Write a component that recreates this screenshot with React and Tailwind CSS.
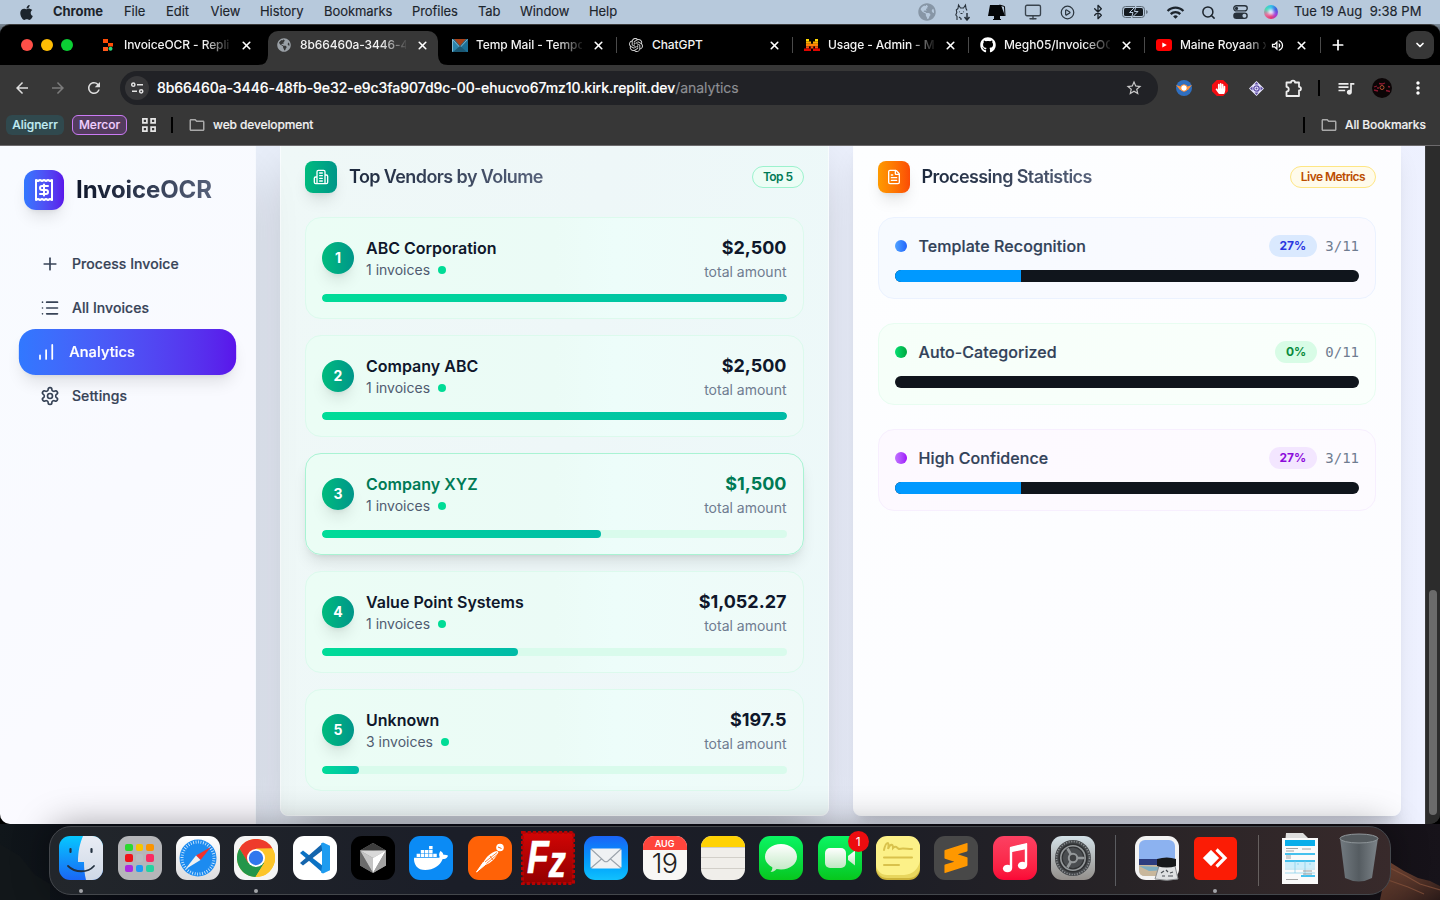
import React from "react";
import { Plus, List, Receipt, FileText, X, ChevronDown, Search, Monitor, CirclePlay, Bluetooth } from "lucide-react";
import { FaApple, FaDocker, FaGithub, FaGlobeAmericas, FaHandPaper } from "react-icons/fa";
import { SiOpenai, SiSublimetext } from "react-icons/si";
import { MdArrowBack, MdArrowForward, MdRefresh, MdStarOutline, MdOutlineExtension, MdQueueMusic, MdMoreVert, MdOutlineFolder, MdOutlineVolumeUp, MdWifi } from "react-icons/md";

const menus = [
  ["File", "w-[42px]"],
  ["Edit", "w-[44.5px]"],
  ["View", "w-[49.5px]"],
  ["History", "w-[64px]"],
  ["Bookmarks", "w-[88px]"],
  ["Profiles", "w-[66px]"],
  ["Tab", "w-[42px]"],
  ["Window", "w-[69px]"],
  ["Help", "w-[40px]"],
];

function MenuBar() {
  return (
    <div className="flex h-6 shrink-0 items-center bg-[#b7c9dc] text-[13px] font-medium tracking-[-0.07px] text-[#1c242c]">
      <div className="flex w-[53px] shrink-0 justify-center"><FaApple className="h-[17px] w-[17px]" /></div>
      <div className="w-[71px] font-bold">Chrome</div>
      {menus.map(([t, w]) => (
        <div key={t} className={w + " shrink-0 whitespace-nowrap font-normal [-webkit-text-stroke:0.15px]"}>{t}</div>
      ))}
      <div className="ml-auto flex items-center">
        <div className="flex w-9 justify-center"><FaGlobeAmericas className="h-[18px] w-[18px] text-[#8796a6]" /></div>
        <div className="flex w-[34px] justify-center">
          <svg width="18" height="18" viewBox="0 0 18 18" fill="none" stroke="#27313b" strokeWidth="1.1">
            <path d="M4 17v-3.500l-1.200-1.500 1-2.500-.5-2.500L5 5.500 5.500 2l2 3h3l2-3 .5 3.500 1 2M6.500 8.500v.8M10.500 8.500v.8M7.500 10.500h2M6 14l2 1.500V17" />
            <path d="M14 10v6M11.500 14l2.500 3 2.500-3" strokeWidth="1.500" />
          </svg>
        </div>
        <div className="flex w-[35px] justify-center">
          <svg width="20" height="18" viewBox="0 0 20 18"><path d="M3 2h11l4 11H1z" fill="#030507" /><path d="M12.500 2l5 1.500.5 9.500" stroke="#030507" fill="none" /><path d="M7.500 13h5v3h-5zM6 16.500h8" stroke="#030507" fill="#030507" /></svg>
        </div>
        <div className="flex w-[37px] justify-center"><Monitor className="h-[18px] w-[18px] text-[#3a444e]" strokeWidth={1.8} /></div>
        <div className="flex w-[32px] justify-center"><CirclePlay className="h-[15px] w-[15px] text-[#2d3740]" strokeWidth={2} /></div>
        <div className="flex w-[30px] justify-center"><Bluetooth className="h-[16px] w-[16px]" strokeWidth={2} /></div>
        <div className="flex w-[44px] justify-center">
          <svg width="26" height="12" viewBox="0 0 26 12"><rect x=".5" y=".5" width="22" height="11" rx="3" fill="none" stroke="#5b6874" /><rect x="2" y="2" width="19" height="8" rx="1.500" fill="#141a20" /><path d="M24.200 4v4q1.500-.5 1.500-2t-1.500-2" fill="#5b6874" /><path d="M14 0L7.500 6.500h3.500L9.500 12 16 5.500h-3.500z" fill="#141a20" stroke="#b7c9dc" strokeWidth="1" /></svg>
        </div>
        <div className="flex w-[36px] justify-center"><MdWifi className="h-[19px] w-[19px]" /></div>
        <div className="flex w-[30px] justify-center"><Search className="h-[15px] w-[15px]" strokeWidth={2.4} /></div>
        <div className="flex w-[34px] justify-center">
          <svg width="15" height="14" viewBox="0 0 15 14"><rect x=".75" y=".75" width="13.500" height="5.200" rx="2.600" fill="none" stroke="#27313b" strokeWidth="1.300" /><circle cx="3.500" cy="3.400" r="1.600" fill="#27313b" /><rect x=".2" y="7.600" width="14.600" height="6.400" rx="3.200" fill="#27313b" /><circle cx="11.400" cy="10.800" r="2" fill="#b7c9dc" /></svg>
        </div>
        <div className="flex w-[28px] justify-center">
          <div className="h-[14px] w-[14px] rounded-full bg-[conic-gradient(#2ec4e8,#3a5fe0,#a53ad8,#e8356f,#e46a9a,#4fd8b0,#2ec4e8)] p-[4px]"><div className="h-full w-full rounded-full bg-[#e8f0ff] blur-[1.5px]" /></div>
        </div>
        <div className="ml-[9px] w-[146px] whitespace-pre font-normal tracking-[0.03px] [-webkit-text-stroke:0.15px]">{"Tue 19 Aug  9:38 PM"}</div>
      </div>
    </div>
  );
}

const ReplitIcon = () => (
  <svg width="16" height="16" viewBox="0 0 16 16"><path d="M3 2h5v4H3zM8 6h5v3.500H8z" fill="#ff4c05" /><path d="M3 10h5v4H3z" fill="#ff5a1c" /><circle cx="10.500" cy="11.800" r="2" fill="#2bd97c" /></svg>
);
const TempMailIcon = () => (
  <svg width="16" height="13" viewBox="0 0 16 13"><path d="M0 0h16v13H0z" fill="#1b6f96" /><path d="M0 0l8 8v5H0z" fill="#2a83ab" /><path d="M2 0h12L8 7z" fill="#a5421a" /><path d="M.5.5L8 8.500l7.500-8M.5.5v12" fill="none" stroke="#9fc7d9" strokeWidth=".8" /><path d="M1 13l7-6 7 6z" fill="#1b5873" /></svg>
);
const MistralIcon = () => (
  <svg width="16" height="12" viewBox="0 0 16 12"><path d="M2 0h3v2.400H2zM11 0h3v2.400h-3z" fill="#ffd800" /><path d="M2 2.400h5v2.400H2zM9 2.400h5v2.400H9z" fill="#ffaf00" /><path d="M2 4.800h12v2.400H2z" fill="#ff8205" /><path d="M2 7.200h3v2.400H2zM6.700 7.200h2.600v2.400H6.700zM11 7.200h3v2.400h-3z" fill="#fa500f" /><path d="M0 9.600h7V12H0zM9 9.600h7V12H9z" fill="#e10500" /></svg>
);
const YouTubeIcon = () => (
  <svg width="16" height="12" viewBox="0 0 16 12"><rect width="16" height="12" rx="3" fill="#f00" /><path d="M6.300 3.400v5.200L10.800 6z" fill="#fff" /></svg>
);

const tabs = [
  { icon: <ReplitIcon />, title: "InvoiceOCR - Repli" },
  { icon: <FaGlobeAmericas className="h-[14px] w-[14px] text-[#9aa0a6]" />, title: "8b66460a-3446-4", active: true },
  { icon: <TempMailIcon />, title: "Temp Mail - Tempo", sep: true },
  { icon: <SiOpenai className="h-[14px] w-[14px] text-[#d8d8d8]" />, title: "ChatGPT", sep: true },
  { icon: <MistralIcon />, title: "Usage - Admin - M", sep: true },
  { icon: <FaGithub className="h-4 w-4 text-white" />, title: "Megh05/InvoiceOC", sep: true },
  { icon: <YouTubeIcon />, title: "Maine Royaan x", sep: true, sound: true },
];

function Tab({ tab }) {
  return (
    <div className="flex h-[40px] w-[176px] shrink-0 items-end pl-[3px]">
      <div className={"relative flex h-[34px] w-[170px] items-center pb-[6px] pl-2 " + (tab.active ? "rounded-t-[10px] bg-[#373737]" : "")}>
        {tab.active && (
          <>
            <svg className="absolute bottom-0 -left-[10px]" width="10" height="10"><path d="M10 0v10H0Q10 10 10 0" fill="#373737" /></svg>
            <svg className="absolute -right-[10px] bottom-0" width="10" height="10"><path d="M0 0v10h10Q0 10 0 0" fill="#373737" /></svg>
          </>
        )}
        <div className="flex w-4 shrink-0 justify-center">{tab.icon}</div>
        <div className={"ml-2 shrink-0 text-[12px] font-medium whitespace-nowrap text-[#f2f2f2] " + (tab.sound ? "w-[86px] tracking-[-0.1px]" : "w-[106px] tracking-[-0.1px]") + (tab.title === "ChatGPT" ? "" : " [mask-image:linear-gradient(90deg,#000_76%,transparent_103%)]")}>{tab.title}</div>
        {tab.sound && <MdOutlineVolumeUp className="ml-[4px] h-[15px] w-[15px] shrink-0 text-white" />}
        <X className={"h-[13px] w-[13px] shrink-0 text-white " + (tab.sound ? "ml-[10px]" : "ml-[10px]")} strokeWidth={3} />
      </div>
      <div className={"mb-[12px] ml-[2px] h-4 w-px shrink-0 " + (tab.sep ? "bg-[#4a4a4a]" : "")} />
    </div>
  );
}

function BrowserChrome() {
  return (
    <>
      <div className="flex h-[40px] shrink-0 bg-black">
        <div className="flex w-[89px] items-center gap-2 pl-[21px]">
          <div className="h-3 w-3 rounded-full bg-[#ff4f48]" />
          <div className="h-3 w-3 rounded-full bg-[#ffbd04]" />
          <div className="h-3 w-3 rounded-full bg-[#0bcf34]" />
        </div>
        {tabs.map((t) => <Tab key={t.title} tab={t} />)}
        <div className="flex w-[34px] items-center justify-center text-white"><Plus className="h-[16px] w-[16px]" strokeWidth={2.6} /></div>
        <div className="mt-[6px] ml-[51px] flex h-7 w-7 items-center justify-center rounded-[9px] bg-[#373737] text-white"><ChevronDown className="h-3 w-3" strokeWidth={3.4} /></div>
      </div>
      <div className="flex h-[46px] shrink-0 items-center bg-[#373737] text-[#dedede]">
        <MdArrowBack className="ml-[13px] h-[18px] w-[18px]" />
        <MdArrowForward className="ml-[18px] h-[18px] w-[18px] text-[#7c7c7c]" />
        <MdRefresh className="ml-[18px] h-[18px] w-[18px]" />
        <div className="ml-[17px] flex h-[34px] w-[1038px] items-center rounded-full bg-[#212226] pl-[5px]">
          <div className="flex h-6 w-6 items-center justify-center rounded-full bg-[#373739]">
            <svg width="13" height="12" viewBox="0 0 13 12" fill="none" stroke="#e4e4e4" strokeWidth="1.500"><circle cx="2.300" cy="2.700" r="1.600" /><path d="M6 2.700h6M1 9.300h5" /><circle cx="10.200" cy="9.300" r="1.600" /></svg>
          </div>
          <div className="ml-2 -mt-[2px] text-[14px] font-medium tracking-[-0.065px] whitespace-nowrap text-white [-webkit-text-stroke:0.15px]">8b66460a-3446-48fb-9e32-e9c3fa907d9c-00-ehucvo67mz10.kirk.replit.dev<span className="font-normal text-[#8e9094]">/analytics</span></div>
          <MdStarOutline className="mr-[15px] ml-auto h-[18px] w-[18px] text-[#c9c9c9]" />
        </div>
        <svg className="ml-[18px]" width="16" height="16" viewBox="0 0 16 16"><circle cx="8" cy="8" r="8" fill="#2f6fc0" /><path d="M0 5l6 2 2-2 2 2 6-2-4 5H4z" fill="#ff9238" /><circle cx="8" cy="8" r="3.300" fill="#fff" stroke="#f58227" /></svg>
        <div className="ml-5 flex h-4 w-4 items-center justify-center bg-[#f40d12] [clip-path:polygon(30%_0,70%_0,100%_30%,100%_70%,70%_100%,30%_100%,0_70%,0_30%)]"><FaHandPaper className="h-[11px] w-[11px] text-white" /></div>
        <svg className="ml-[21px]" width="15" height="15" viewBox="0 0 15 15"><path d="M7.500 0L15 7.500 7.500 15 0 7.500z" fill="#eceaff" /><path d="M7.500 1L9.500 3.500h-4zM7.500 14l-2-2.500h4zM1 7.500l2.500-2v4zM14 7.500l-2.500-2v4z" fill="#5c4ba4" /><circle cx="7.500" cy="7.500" r="2.700" fill="none" stroke="#5c4ba4" strokeWidth="1.300" /><circle cx="7.500" cy="7.500" r="1" fill="#5c4ba4" /></svg>
        <svg className="ml-[20px]" width="19" height="19" viewBox="0 0 19 19" fill="none" stroke="#ededed" strokeWidth="1.800" strokeLinejoin="round"><path d="M2.500 3.500H7c0-2.600 4-2.600 4 0h4v4.300c2.600 0 2.600 3.700 0 3.700v5.500H2.500v-4.300c3-.2 3-4.700 0-4.900z" /></svg>
        <div className="ml-[15px] h-4 w-[2px] bg-black" />
        <MdQueueMusic className="ml-[16px] h-5 w-5 text-[#ededed]" />
        <svg className="ml-4" width="20" height="20" viewBox="0 0 20 20"><circle cx="10" cy="10" r="10" fill="#0c0506" /><path d="M2 9l3-1M7 5.500l3 .5 3-1M16 8.500l2 .5M2 12l4 1M14 12.500l4 1M5 10h2" stroke="#8a1830" strokeWidth="1.300" fill="none" /><circle cx="10" cy="9.500" r="2" fill="none" stroke="#b2502f" /></svg>
        <MdMoreVert className="ml-[16px] h-5 w-5 text-white" />
      </div>
      <div className="flex h-[35px] shrink-0 items-center border-b border-[#6c6a6c] bg-[#373737] pb-[7px] text-[12px] font-medium tracking-[-0.12px] whitespace-nowrap text-[#f1f1f1] [-webkit-text-stroke:0.15px]">
        <div className="ml-[6px] flex h-5 w-[58px] items-center justify-center rounded-[6px] bg-[#30494e] tracking-normal text-[#c3eef5]">Alignerr</div>
        <div className="ml-2 flex h-5 w-[55px] items-center justify-center rounded-[6px] border border-[#cb7bf5] bg-[#533c5e] tracking-normal text-[#f1d1ff]">Mercor</div>
        <svg className="ml-[15px]" width="14" height="14" viewBox="0 0 14 14" fill="none" stroke="#e6e6e6" strokeWidth="1.700"><path d="M.9.900h4v4h-4zM9.100.900h4v4h-4zM.9 9.100h4v4h-4zM9.100 9.100h4v4h-4z" /></svg>
        <div className="ml-[15px] h-4 w-[2px] bg-black" />
        <MdOutlineFolder className="ml-[15px] h-[18px] w-[18px] text-[#a9a9a9]" />
        <div className="ml-[7px]">web development</div>
        <div className="ml-auto h-4 w-[2px] bg-black" />
        <MdOutlineFolder className="ml-[15px] h-[18px] w-[18px] text-[#a9a9a9]" />
        <div className="mr-[14px] ml-[7px] w-[81px]">All Bookmarks</div>
      </div>
    </>
  );
}

const SettingsIcon = () => (
  <svg className="h-5 w-5" viewBox="0 0 24 24" fill="none" stroke="currentColor" strokeWidth="2" strokeLinecap="round" strokeLinejoin="round">
    <path d="M12.220 2h-.44a2 2 0 0 0-2 2v.18a2 2 0 0 1-1 1.730l-.43.25a2 2 0 0 1-2 0l-.15-.08a2 2 0 0 0-2.730.73l-.22.38a2 2 0 0 0 .73 2.730l.15.1a2 2 0 0 1 1 1.720v.51a2 2 0 0 1-1 1.740l-.15.09a2 2 0 0 0-.73 2.730l.22.38a2 2 0 0 0 2.730.73l.15-.08a2 2 0 0 1 2 0l.43.25a2 2 0 0 1 1 1.730V20a2 2 0 0 0 2 2h.44a2 2 0 0 0 2-2v-.18a2 2 0 0 1 1-1.730l.43-.25a2 2 0 0 1 2 0l.15.08a2 2 0 0 0 2.730-.73l.22-.39a2 2 0 0 0-.73-2.730l-.15-.08a2 2 0 0 1-1-1.740v-.5a2 2 0 0 1 1-1.740l.15-.09a2 2 0 0 0 .73-2.730l-.22-.38a2 2 0 0 0-2.730-.73l-.15.08a2 2 0 0 1-2 0l-.43-.25a2 2 0 0 1-1-1.730V4a2 2 0 0 0-2-2z" />
    <circle cx="12" cy="12" r="3" />
  </svg>
);
const BarsIcon = () => (
  <svg className="h-5 w-5" viewBox="0 0 24 24" fill="none" stroke="currentColor" strokeWidth="2" strokeLinecap="round"><path d="M5 20v-4M12 20V10M19 20V4" /></svg>
);
const BuildingIcon = () => (
  <svg className="h-4 w-4" viewBox="0 0 24 24" fill="none" stroke="currentColor" strokeWidth="2" strokeLinecap="round" strokeLinejoin="round"><path d="M6 22V4a2 2 0 0 1 2-2h8a2 2 0 0 1 2 2v18ZM6 12H4a2 2 0 0 0-2 2v6a2 2 0 0 0 2 2h2M18 9h2a2 2 0 0 1 2 2v9a2 2 0 0 1-2 2h-2M10 6h4M10 10h4M10 14h4M10 18h4" /></svg>
);

function Sidebar() {
  const item = "flex h-11 items-center gap-3 rounded-2xl px-4 text-[14px] font-medium tracking-[0.06px] text-[#374357] [-webkit-text-stroke:0.2px]";
  return (
    <aside className="z-10 w-64 shrink-0 border-r border-[#f6f9fe] bg-[linear-gradient(135deg,#f8fbff_0%,#f9faff_50%,#fcfaff_100%)] px-6 pt-6 shadow-[0_25px_50px_-12px_rgba(0,0,0,0.2)]">
      <div className="flex items-center gap-3">
        <div className="flex h-10 w-10 items-center justify-center rounded-xl bg-linear-to-r from-[#3178ff] to-[#5a14ea] text-white shadow-lg"><Receipt className="h-6 w-6" strokeWidth={2} /></div>
        <div className="bg-linear-to-r from-[#0f172b] to-[#56617a] bg-clip-text text-[24px] leading-8 font-bold tracking-[-0.1px] text-transparent">InvoiceOCR</div>
      </div>
      <nav className="mt-8">
        <div className={item}><Plus className="h-5 w-5" /><span className="-mt-[2px]">Process Invoice</span></div>
        <div className={item}><List className="h-5 w-5" /><span className="-mt-[2px]">All Invoices</span></div>
        <div className="flex h-11 scale-105 items-center gap-3 rounded-2xl bg-linear-to-r from-[#3178ff] to-[#5a14ea] px-4 text-[14px] font-medium tracking-[0.06px] text-white shadow-lg [-webkit-text-stroke:0.2px]"><BarsIcon /><span className="-mt-[2px]">Analytics</span></div>
        <div className={item}><SettingsIcon /><span className="-mt-[2px]">Settings</span></div>
      </nav>
    </aside>
  );
}

const vendors = [
  { name: "ABC Corporation", count: 1, amount: "$2,500", pct: 100 },
  { name: "Company ABC", count: 1, amount: "$2,500", pct: 100 },
  { name: "Company XYZ", count: 1, amount: "$1,500", pct: 60, hover: true },
  { name: "Value Point Systems", count: 1, amount: "$1,052.27", pct: 42.1 },
  { name: "Unknown", count: 3, amount: "$197.5", pct: 7.9 },
];

function VendorRow({ v, rank }) {
  return (
    <div className={"h-[102px] rounded-2xl border bg-[linear-gradient(90deg,#ebfdf5_0%,#ebfbf6_50%,#edfdfa_62%,#effaf8_100%)] p-4 " + (v.hover ? "border-[#a9f3d3] shadow-lg" : "border-[#dcfaed]")}>
      <div className="flex h-12 items-center">
        <div className="flex h-8 w-8 items-center justify-center rounded-full bg-linear-to-r from-[#00bb7d] to-[#009689] pb-px text-[14px] font-bold text-white shadow-lg">{rank}</div>
        <div className="ml-3">
          <div className={"text-base leading-6 font-semibold " + (v.hover ? "text-[#007a55]" : "text-[#0f172b]")}>{v.name}</div>
          <div className="flex items-center gap-2 text-sm leading-5 text-[#4f5b70]">{v.count} invoices<span className="h-2 w-2 rounded-full bg-[#00dc96]" /></div>
        </div>
        <div className="ml-auto text-right">
          <div className={"text-lg leading-7 font-bold " + (v.hover ? "text-[#007a55]" : "text-[#0f172b]")}>{v.amount}</div>
          <div className="text-sm leading-5 text-[#6f7c90]">total amount</div>
        </div>
      </div>
      <div className="mt-3 h-2 overflow-hidden rounded-full bg-[#d9fbec]">
        <div className="h-full rounded-full bg-linear-to-r from-[#00dc98] to-[#00bba7]" style={{ width: v.pct + "%" }} />
      </div>
    </div>
  );
}

const stats = [
  { label: "Template Recognition", pct: 27, fill: 27.270, ratio: "3/11", row: "from-[#f6faff] to-[#fbfaff] border-[#ebf2ff]", dot: "from-[#51a2ff] to-[#2563fc]", badge: "bg-[#dae9fe] text-[#2a35df]" },
  { label: "Auto-Categorized", pct: 0, fill: 0, ratio: "0/11", row: "from-[#f6fff9] to-[#fafffc] border-[#e8fdf1]", dot: "from-[#05df72] to-[#00a73e]", badge: "bg-[#d8fce6] text-[#0a8a3c]" },
  { label: "High Confidence", pct: 27, fill: 27.270, ratio: "3/11", row: "from-[#fdf9ff] to-[#fdfbff] border-[#f7effe]", dot: "from-[#c070ff] to-[#a000fa]", badge: "bg-[#f3e6ff] text-[#8d0bdb]" },
];

function CardHeader({ icon, tone, title, badge, badgeTone }) {
  return (
    <div className="flex h-8 items-center">
      <div className={"flex h-8 w-8 items-center justify-center rounded-[8px] bg-linear-to-r text-white shadow-lg " + tone}>{icon}</div>
      <div className="ml-3 bg-linear-to-r from-[#1d293d] to-[#56617a] bg-clip-text text-lg font-semibold tracking-[-0.59px] text-transparent">{title}</div>
      <div className={"ml-auto rounded-full border px-2.5 py-0.5 text-xs font-semibold tracking-[-0.56px] " + badgeTone}>{badge}</div>
    </div>
  );
}

function Content() {
  return (
    <main className="min-w-0 flex-1 overflow-hidden bg-[linear-gradient(100deg,#e9effa,#eaeffb_30%,#eef1ff)]">
      <div className="-mt-[10px] grid h-[680px] grid-cols-2 gap-6 px-6">
        <section className="rounded-lg border border-[#f8fcfd] bg-[linear-gradient(100deg,#eff8f7_0%,#eef7f8_50%,#edf9f9_100%)] p-6 shadow-[0_25px_50px_-12px_rgba(0,0,0,0.25)]">
          <CardHeader icon={<BuildingIcon />} tone="from-[#00bb7d] to-[#009689]" title="Top Vendors by Volume" badge="Top 5" badgeTone="border-[#9cf2cd] bg-[#ecfdf5] text-[#007a55]" />
          <div className="mt-6 flex flex-col gap-4">
            {vendors.map((v, i) => <VendorRow key={v.name} v={v} rank={i + 1} />)}
          </div>
        </section>
        <section className="rounded-lg border border-[#fcfdff] bg-[linear-gradient(135deg,#fdfeff,#fcfcff)] p-6 shadow-xl">
          <CardHeader icon={<FileText className="h-4 w-4" />} tone="from-[#fe9a00] to-[#fb4b05]" title="Processing Statistics" badge="Live Metrics" badgeTone="border-[#fee685] bg-[#fffbeb] text-[#bb4d00]" />
          <div className="mt-6 flex flex-col gap-6">
            {stats.map((s) => (
              <div key={s.label} className={"rounded-2xl border bg-linear-to-r p-4 " + s.row}>
                <div className="flex h-6 items-center">
                  <div className={"h-3 w-3 rounded-full bg-linear-to-r " + s.dot} />
                  <div className="ml-3 text-base font-medium tracking-[0.09px] text-[#314158] [-webkit-text-stroke:0.2px]">{s.label}</div>
                  <div className={"ml-auto rounded-full border border-transparent px-2.5 py-0.5 text-xs font-bold " + s.badge}>{s.pct}%</div>
                  <div className="ml-2 font-['DejaVu_Sans_Mono',monospace] text-sm text-[#6f7c90]">{s.ratio}</div>
                </div>
                <div className="mt-3 h-3 overflow-hidden rounded-full bg-[#10151c]">
                  <div className="h-full bg-[#0099ff]" style={{ width: s.fill + "%" }} />
                </div>
              </div>
            ))}
          </div>
        </section>
      </div>
    </main>
  );
}

const tile = "flex h-11 w-11 items-center justify-center overflow-hidden rounded-[11px] ";

const Finder = () => (
  <svg className="rounded-[11px]" width="44" height="44" viewBox="0 0 44 44">
    <defs><linearGradient id="fnd" x2="0" y2="1"><stop stopColor="#06c8ff" /><stop offset="1" stopColor="#1a66f5" /></linearGradient><linearGradient id="fnr" x2="0" y2="1"><stop stopColor="#e9edf5" /><stop offset="1" stopColor="#cfd8e6" /></linearGradient></defs>
    <rect width="44" height="44" fill="url(#fnd)" /><path d="M24 0c-3 7-5 15-5 26h6c0 6 .5 12 2 18h17V0z" fill="url(#fnr)" />
    <path d="M11.500 13v3M32.500 13v3" stroke="#22303f" strokeWidth="2.200" strokeLinecap="round" /><path d="M9 30c7 7 20 7 26 0" stroke="#22303f" strokeWidth="1.800" fill="none" strokeLinecap="round" />
  </svg>
);
const launchColors = ["bg-[#2bd82f]", "bg-[#f7c500]", "bg-[#fb9400]", "bg-[#f0121a]", "bg-[#b7bcc0]", "bg-[#fb2b62]", "bg-[#ac2ae0]", "bg-[#1d9bf5]", "bg-[#25d3a0]"];
const Launchpad = () => (
  <div className={tile + "bg-[#b5b6b9]"}>
    <div className="grid grid-cols-3 gap-[3px]">{launchColors.map((c) => <div key={c} className={"h-[7.500px] w-[7.500px] rounded-[2px] " + c} />)}</div>
  </div>
);
const Safari = () => (
  <div className={tile + "bg-linear-to-b from-white to-[#dcdcde]"}>
    <svg width="38" height="38" viewBox="0 0 38 38"><circle cx="19" cy="19" r="18.500" fill="#1c8bf0" /><circle cx="19" cy="19" r="16" fill="none" stroke="#d5ecff" strokeWidth="3" strokeDasharray=".8 1.700" /><path d="M32 8L17 16.500l4.500 4.500z" fill="#f3322c" /><path d="M17 16.500L6 30.500l15.500-9.500z" fill="#f1f1f1" /></svg>
  </div>
);
const Chrome = () => (
  <div className={tile + "bg-[#f5f5f5]"}>
    <svg width="38" height="38" viewBox="0 0 38 38"><circle cx="19" cy="19" r="19" fill="#fcc934" /><path d="M2.500 9.500A19 19 0 0 1 35.500 9.500L19 10l-8.500 13.500z" fill="#ee3b2b" /><path d="M2.500 9.500A19 19 0 0 0 18.500 38l9-14.500-8.500 4-8-4z" fill="#23964a" /><path d="M35.500 9.500H19l8.500 14L18.500 38A19 19 0 0 0 35.500 9.500" fill="#fcc52a" /><circle cx="19" cy="19" r="9" fill="#fff" /><circle cx="19" cy="19" r="7.200" fill="#3077ee" /></svg>
  </div>
);
const VSCode = () => (
  <div className={tile + "bg-white"}>
    <svg width="32" height="32" viewBox="0 0 32 32"><path d="M1 11l3-2.500L24 24v7z" fill="#0b72c4" /><path d="M1 21l3 2.500L24 8V1z" fill="#1465ad" /><path d="M24 .5l7 3.300v24.400l-7 3.300-2-1 1-6V7.500l-1-6z" fill="#1f9cf0" /></svg>
  </div>
);
const Cursor = () => (
  <div className={tile + "bg-black"}>
    <svg width="28" height="32" viewBox="0 0 28 32"><path d="M14 1l13 7.500v15L14 31 1 23.500v-15z" fill="#8b8b8b" /><path d="M1 8.500L14 1v8zM14 1l13 7.500-13 .5z" fill="#3d3d3d" /><path d="M1 8.500h26L14 16z" fill="#d9d9d9" /><path d="M1 8.500L14 16v15z" fill="#c4c4c4" /><path d="M27 8.500L14 31V16z" fill="#fff" /><path d="M1 8.500v15L14 31z" fill="#6b6b6b" /><path d="M27 8.500v15L14 31z" fill="#a2a2a2" /></svg>
  </div>
);
const Postman = () => (
  <div className={tile + "bg-[#ff6207]"}>
    <svg width="34" height="34" viewBox="0 0 34 34"><circle cx="27" cy="6.500" r="3.800" fill="#fff" /><path d="M24 10c-6 1-11 6-14 12l2.500 2C18 22 23 17 25.500 11z" fill="#fff" /><path d="M10.500 21L3.500 31l9-7.500" fill="#fff" stroke="#fff" /><path d="M12 21L24 11.500M13.500 22.500L25 13M17 15l3 4" stroke="#ff6207" strokeWidth=".8" /><path d="M25 6l3.500 1.500" stroke="#ff6207" /></svg>
  </div>
);
const FileZilla = () => (
  <svg className="shrink-0" width="54" height="54" viewBox="0 0 54 54">
    <defs><linearGradient id="fz" x2="0" y2="1"><stop stopColor="#d10505" /><stop offset="1" stopColor="#920000" /></linearGradient></defs>
    <rect x="1.500" y="1.500" width="51" height="51" fill="url(#fz)" stroke="#b90202" strokeWidth="3" strokeDasharray="3.200 2" />
    <text x="6" y="42" fontFamily="Liberation Sans, sans-serif" fontWeight="bold" fontStyle="italic" fontSize="47" fill="#fff" stroke="#fff" strokeWidth=".6" textLength="39" lengthAdjust="spacingAndGlyphs">F<tspan dy="4" fontSize="45">z</tspan></text>
  </svg>
);
const Mail = () => (
  <div className={tile + "bg-linear-to-b from-[#1a63f7] to-[#12c1fd]"}>
    <svg width="32" height="21" viewBox="0 0 32 21"><rect x=".5" y=".5" width="31" height="20" rx="2" fill="#eff1f3" /><path d="M1 1l13 12q2 1.500 4 0L31 1M1 20l10.500-9M31 20l-10.500-9" fill="none" stroke="#9ba3ab" strokeWidth="1.100" /></svg>
  </div>
);
const Calendar = () => (
  <div className="h-11 w-11 overflow-hidden rounded-[11px] bg-[#f8f7f5] text-center">
    <div className="h-[14px] bg-[#ff453c] text-[9px] leading-[15px] font-semibold text-white">AUG</div>
    <div className="text-[27px] leading-[27px] font-light tracking-[-0.5px] text-[#222]">19</div>
  </div>
);
const Notes = () => (
  <div className="h-11 w-11 overflow-hidden rounded-[11px] bg-[#f0eeea]">
    <div className="h-[11px] bg-[#ffd204]" /><div className="h-[11px] border-t border-b border-[#d2cfc9]" /><div className="h-[11px] border-b border-[#d2cfc9]" />
  </div>
);
const Messages = () => (
  <div className={tile + "bg-linear-to-b from-[#0bf562] to-[#07c71b]"}>
    <svg width="34" height="30" viewBox="0 0 34 30"><defs><linearGradient id="ms" x2="0" y2="1"><stop stopColor="#fff" /><stop offset="1" stopColor="#bfe8c2" /></linearGradient></defs><path d="M17 1c9 0 16 5.500 16 12.800S26 26.500 17 26.500c-1.500 0-3-.2-4.400-.5C11 28 9 29 6.500 29c1.300-1.300 2-2.700 1.800-4.700C4 22 1 18.300 1 13.800 1 6.500 8 1 17 1" fill="url(#ms)" /></svg>
  </div>
);
const FaceTime = () => (
  <div className="relative">
    <div className={tile + "bg-linear-to-b from-[#0bf562] to-[#07c71b]"}>
      <svg width="32" height="20" viewBox="0 0 32 20"><defs><linearGradient id="ft" x2="0" y2="1"><stop stopColor="#fff" /><stop offset="1" stopColor="#bfe8c2" /></linearGradient></defs><rect x="1" width="21" height="20" rx="5" fill="url(#ft)" /><path d="M24 8l7-5.500v15L24 12z" fill="url(#ft)" /></svg>
    </div>
    <div className="absolute -top-[5px] -right-[7px] flex h-[21px] w-[21px] items-center justify-center rounded-full bg-[#ec0c0f] text-[12px] text-white">1</div>
  </div>
);
const Stickies = () => (
  <svg width="44" height="44" viewBox="0 0 44 44"><rect y="3" width="44" height="41" rx="11" fill="#cdb43a" /><rect y="1" width="44" height="41" rx="11" fill="#e8d65e" /><path d="M11 0h22a11 11 0 0 1 11 11v14q-3 13-16 14H11A11 11 0 0 1 0 28V11A11 11 0 0 1 11 0" fill="#fcf188" /><path d="M8 14c2-9 6-9 4-1 2-5 5-6 5-1 3-3 4 0 6 1 3-1 8 0 13 0M8 21.500h28M8 29h15" fill="none" stroke="#d9c24c" strokeWidth="2" strokeLinecap="round" /></svg>
);
const Music = () => (
  <div className={tile + "bg-linear-to-b from-[#fc4062] to-[#fa0536]"}>
    <svg width="26" height="30" viewBox="0 0 26 30"><path d="M9 25V5.500L24 2v20" fill="none" stroke="#fff" strokeWidth="2.400" /><path d="M8 4l17-4v6L8 9.500z" fill="#fff" /><ellipse cx="5.500" cy="25.500" rx="4.600" ry="3.800" fill="#fff" /><ellipse cx="20.500" cy="22.500" rx="4.600" ry="3.800" fill="#fff" /></svg>
  </div>
);
const SystemSettings = () => (
  <div className={tile + "bg-linear-to-b from-[#d3e1e8] to-[#938f8b]"}>
    <svg width="38" height="38" viewBox="0 0 38 38" fill="none"><circle cx="19" cy="19" r="18" fill="#45484b" /><circle cx="19" cy="19" r="16.500" stroke="#8f9396" strokeWidth="1.600" strokeDasharray="1.100 1.500" /><circle cx="19" cy="19" r="13.800" fill="#94989a" stroke="#2e3032" strokeWidth="1.600" /><circle cx="19" cy="19" r="10.800" fill="#4a4d50" stroke="#303234" strokeWidth="1.200" /><path d="M19 19L13.500 9.500M19 19h11.500M19 19l-5.500 9.500" stroke="#94989a" strokeWidth="2.600" /><circle cx="19" cy="19" r="4.200" stroke="#94989a" fill="#3f4143" strokeWidth="2" /></svg>
  </div>
);
const Preview = () => (
  <svg width="46" height="46" viewBox="0 0 46 46"><rect x="1" y="1" width="44" height="44" rx="11" fill="#f3f3f3" /><rect x="5" y="5" width="36" height="36" rx="6" fill="#8cb2f0" /><path d="M5 24h36v6H5z" fill="#2c3d7f" /><path d="M5 30h36v5q0 6-6 6H11q-6 0-6-6z" fill="#c8b79c" /><path d="M5 31l20 1 8 3-18 1z" fill="#7daec2" /><path d="M25 31l-4 13q12 2.500 23 0l-3-13z" fill="#dfe1e2" stroke="#8a8d90" /><path d="M27 38l3-2M32 35l2 2M36 38l3-1M28 41h3M34 41h5" stroke="#4c5156" strokeWidth="1.200" fill="none" /><path d="M23 24q10-3 19 0v7q-9 3-19 0z" fill="#16181a" /></svg>
);
const AnyDesk = () => (
  <div className="flex h-[43px] w-[43px] items-center justify-center rounded-[5px] bg-[#fb1c05]">
    <svg width="28" height="20" viewBox="0 0 28 20"><path d="M15.500 1.500L24 10l-8.500 8.500" stroke="#fff" strokeWidth="3.200" fill="none" /><path d="M10 .5l9.500 9.500-9.500 9.500L.5 10z" fill="#fff" stroke="#fb1c05" strokeWidth="1.800" /></svg>
  </div>
);
const Documents = () => (
  <svg width="36" height="52" viewBox="0 0 36 52"><path d="M4 1h17l6 6v5H3z" fill="#dedede" /><rect y="6" width="36" height="46" fill="#fafafa" /><rect x="3" y="8" width="30" height="6" fill="#0aaeea" /><path d="M4 16.500h12M4 19h8M20 17h9M4 24h5M4 26h5M4 47.500h12" stroke="#a4a4a4" strokeWidth="1.100" /><path d="M3 22h30M3 29h30M19 44h14" stroke="#0aaeea" strokeWidth="1.600" /><path d="M3 30h30v6H3z" fill="#cdeefb" /><path d="M13 29v12M23 29v15M3 37h30M3 41h30M15 32h2M27 32h2" stroke="#7bcbea" strokeWidth=".7" /><path d="M21 39h9M21 42h9" stroke="#999" /></svg>
);
const Trash = () => (
  <svg width="40" height="50" viewBox="0 0 40 50"><defs><linearGradient id="tr" x2="1" y2="0"><stop stopColor="#727a80" /><stop offset=".5" stopColor="#555c61" /><stop offset="1" stopColor="#7d8489" /></linearGradient></defs><path d="M1 5l5 40q14 7 27 0l6-40z" fill="url(#tr)" /><ellipse cx="20" cy="5.500" rx="19" ry="4.500" fill="#555b5f" stroke="#8f969a" /></svg>
);

function DockItem({ children, running }) {
  return (
    <div className="flex w-[58.350px] shrink-0 flex-col items-center">
      <div className="flex h-[62px] w-full items-center justify-center">{children}</div>
      {running && <div className="h-1 w-1 rounded-full bg-[#a3a5a9]" />}
    </div>
  );
}

function Dock() {
  return (
    <div className="absolute top-[826px] left-[49px] z-20 flex h-[69px] w-[1342px] rounded-[22px] border border-[#44474c] bg-[linear-gradient(90deg,#22262b_0%,#1b1e28_30%,#1b1d26_60%,#272326_80%,#382a2b_100%)] pl-[2px] shadow-[0_0_36px_rgba(0,0,0,0.38)]">
      <DockItem running><Finder /></DockItem>
      <DockItem><Launchpad /></DockItem>
      <DockItem><Safari /></DockItem>
      <DockItem running><Chrome /></DockItem>
      <DockItem><VSCode /></DockItem>
      <DockItem><Cursor /></DockItem>
      <DockItem><div className={tile + "bg-[#0b8bf5]"}><FaDocker className="h-[34px] w-[34px] text-white" /></div></DockItem>
      <DockItem><Postman /></DockItem>
      <DockItem><FileZilla /></DockItem>
      <DockItem><Mail /></DockItem>
      <DockItem><Calendar /></DockItem>
      <DockItem><Notes /></DockItem>
      <DockItem><Messages /></DockItem>
      <DockItem><FaceTime /></DockItem>
      <DockItem><Stickies /></DockItem>
      <DockItem><div className={tile + "bg-[#484848]"}><SiSublimetext className="h-[30px] w-[30px] text-[#ff9800]" /></div></DockItem>
      <DockItem><Music /></DockItem>
      <DockItem><SystemSettings /></DockItem>
      <div className="mt-2 h-[51px] w-[25.700px] shrink-0"><div className="ml-[13px] h-full w-px bg-[#5b5c60]" /></div>
      <DockItem><Preview /></DockItem>
      <DockItem running><AnyDesk /></DockItem>
      <div className="mt-2 h-[51px] w-[26.500px] shrink-0"><div className="ml-[13px] h-full w-px bg-[#66605f]" /></div>
      <DockItem><Documents /></DockItem>
      <DockItem><Trash /></DockItem>
    </div>
  );
}

export default function App() {
  return (
    <div className="relative flex h-[900px] w-[1440px] flex-col overflow-hidden bg-[#0a0c12] font-['Inter',sans-serif]">
      <MenuBar />
      <div className="flex h-[800px] shrink-0 bg-[linear-gradient(#7f8d9a_0,#000_20px)]">
        <div className="flex w-full flex-col overflow-hidden rounded-t-[10px] rounded-b-[10px] border-t border-[#3a3a3a] bg-[#2c2c2c]">
          <BrowserChrome />
          <div className="flex min-h-0 flex-1 overflow-hidden">
            <Sidebar />
            <Content />
            <div className="flex w-[15px] shrink-0 flex-col border-l border-[#3c3c3c] bg-[#2c2c2c] pt-[444px] pl-[3px]">
              <div className="h-[225px] w-2 rounded-full bg-[#6b6b6b]" />
            </div>
          </div>
        </div>
      </div>
      <svg className="block shrink-0" width="1440" height="76" viewBox="0 0 1440 76">
        <defs>
          <linearGradient id="sky" x2="1" y2="0"><stop stopColor="#10161a" /><stop offset=".1" stopColor="#0a0c16" /><stop offset=".9" stopColor="#110e14" /><stop offset="1" stopColor="#17131a" /></linearGradient>
          <linearGradient id="rock" x2="1" y2="1"><stop stopColor="#85513c" /><stop offset="1" stopColor="#2a1a18" /></linearGradient>
        </defs>
        <rect width="1440" height="76" fill="url(#sky)" />
        <path d="M0 20l20 12 14 18 16 10v16H0z" fill="#12171a" />
        <path d="M1388 37l16 10 14 7 12 3 10 5v14h-60z" fill="url(#rock)" />
        <path d="M1390 44l16 8 14 8 20 6M1388 56l20 7 16 7" stroke="#a8684a" strokeWidth="1.200" fill="none" opacity=".5" />
      </svg>
      <Dock />
    </div>
  );
}
